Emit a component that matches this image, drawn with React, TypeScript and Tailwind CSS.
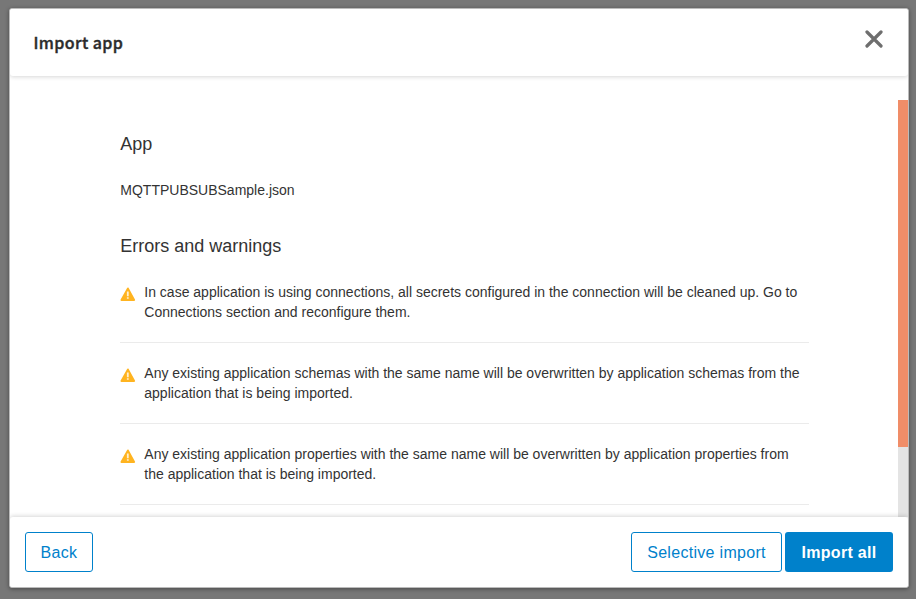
const warnings = [
  'In case application is using connections, all secrets configured in the connection will be cleaned up. Go to Connections section and reconfigure them.',
  'Any existing application schemas with the same name will be overwritten by application schemas from the application that is being imported.',
  'Any existing application properties with the same name will be overwritten by application properties from the application that is being imported.',
];

function WarningIcon() {
  return (
    <svg className="mt-[5px] h-4 w-4 shrink-0" viewBox="0 0 16 16">
      <path
        d="M7.9 1.4 14.2 13H1.4Z"
        fill="#ffb420"
        stroke="#ffb420"
        strokeWidth="1.8"
        strokeLinejoin="round"
      />
      <path d="M6.9 4.6h1.8v4.6H6.9zM6.9 10.2h1.8v1.6H6.9z" fill="#fff" fillOpacity="0.8" />
    </svg>
  );
}

export default function App() {
  return (
    <div className="h-[599px] w-full overflow-hidden bg-[#777777] pl-[9px] pt-2 font-['Liberation_Sans',Arial,sans-serif] text-[#333333]">
      <div className="flex h-[580px] w-[900px] flex-col overflow-hidden rounded-[3px] border border-[#bbbbbb] bg-white shadow-[0_1px_4px_rgba(0,0,0,0.4)]">
        <header className="z-10 flex h-[67px] shrink-0 items-center justify-between rounded-b-[3px] bg-white pl-[23.5px] pr-[25px] shadow-[0_1px_4px_rgba(0,0,0,0.16)]">
          <h1 className="mb-[2px] font-['Noto_Sans_CJK_SC',sans-serif] text-[16px] font-medium leading-6 tracking-[0.4px] text-[#2b2b2b] [-webkit-text-stroke:0.4px_#2b2b2b]">
            Import app
          </h1>
          <button aria-label="Close" className="mb-2">
            <svg className="h-[18px] w-[18px]" viewBox="0 0 18 18">
              <path d="M2 2 16 16M16 2 2 16" stroke="#6e6e6e" strokeWidth="3.2" strokeLinecap="round" />
            </svg>
          </button>
        </header>
        <main className="flex min-h-0 flex-1 overflow-hidden pt-6">
          <div className="flex-1 pl-[110.3px] pt-[30px]">
            <div className="w-[689px]">
              <h2 className="text-[18px] leading-7">App</h2>
              <p className="mt-[22px] text-[14px] leading-5">MQTTPUBSUBSample.json</p>
              <h2 className="mt-8 text-[18px] leading-7">Errors and warnings</h2>
              <ul className="mt-[2px]">
                {warnings.map((text) => (
                  <li key={text} className="flex gap-2 border-b border-[#ebebeb] py-5">
                    <WarningIcon />
                    <p className="text-[14px] leading-5">{text}</p>
                  </li>
                ))}
              </ul>
            </div>
          </div>
          <div className="w-[10px] bg-[#e4e4e4]">
            <div className="h-[347px] bg-[#f08d68]" />
          </div>
        </main>
        <footer className="z-10 flex h-[70px] shrink-0 items-center gap-[3px] rounded-t-[3px] bg-white px-[15px] text-[16px] tracking-[0.3px] shadow-[0_-1px_4px_rgba(0,0,0,0.16)]">
          <button className="h-10 w-[68px] rounded-[3px] border border-[#0081cb] pt-[2px] text-[#0081cb]">Back</button>
          <button className="ml-auto h-10 w-[151px] rounded-[3px] border border-[#0081cb] pt-[2px] text-[#0081cb]">
            Selective import
          </button>
          <button className="h-10 w-[108px] rounded-[3px] bg-[#0081cb] pt-[2px] font-bold text-white">Import all</button>
        </footer>
      </div>
    </div>
  );
}
